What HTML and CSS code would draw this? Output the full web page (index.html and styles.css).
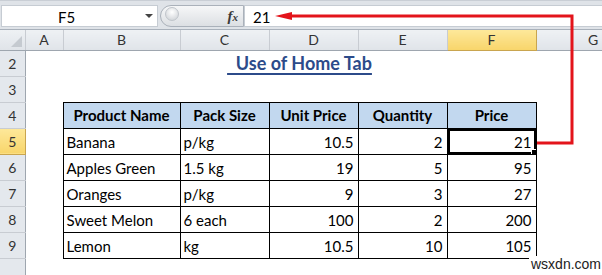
FILE: index.html
```html
<!DOCTYPE html>
<html>
<head>
<meta charset="utf-8">
<link rel="stylesheet" href="styles.css">
</head>
<body>
<div class="app">
  <div class="fbar">
    <div class="namebox"><span class="ref">F5</span><span class="dd"></span></div>
    <div class="grip"><span class="knob"></span><span class="fx">f<span class="fxx">x</span></span></div>
    <div class="formula">21</div>
  </div>
  <table class="sheet">
    <colgroup>
      <col class="c-rh"><col class="c-a"><col class="c-b"><col class="c-c"><col class="c-d"><col class="c-e"><col class="c-f"><col class="c-g">
    </colgroup>
    <tr class="colhdr">
      <th class="corner"><span class="tri"></span></th><th>A</th><th>B</th><th>C</th><th>D</th><th>E</th><th class="selhdr">F</th><th>G</th>
    </tr>
    <tr>
      <th class="rh">2</th><td></td><td colspan="5" class="title"><span>&nbsp;&nbsp;Use of Home Tab</span></td><td></td>
    </tr>
    <tr>
      <th class="rh">3</th><td></td><td></td><td></td><td></td><td></td><td></td><td></td>
    </tr>
    <tr class="thead">
      <th class="rh">4</th><td class="blank"></td><td class="h">Product Name</td><td class="h">Pack Size</td><td class="h">Unit Price</td><td class="h">Quantity</td><td class="h">Price</td><td class="blank"></td>
    </tr>
    <tr>
      <th class="rh selrow">5</th><td class="blank"></td><td class="d">Banana</td><td class="d">p/kg</td><td class="d n">10.5</td><td class="d n">2</td><td class="d n active"><span class="val">21</span><span class="selbox"></span><span class="handle"></span></td><td class="blank"></td>
    </tr>
    <tr>
      <th class="rh">6</th><td class="blank"></td><td class="d">Apples Green</td><td class="d">1.5 kg</td><td class="d n">19</td><td class="d n">5</td><td class="d n">95</td><td class="blank"></td>
    </tr>
    <tr>
      <th class="rh">7</th><td class="blank"></td><td class="d">Oranges</td><td class="d">p/kg</td><td class="d n">9</td><td class="d n">3</td><td class="d n">27</td><td class="blank"></td>
    </tr>
    <tr>
      <th class="rh">8</th><td class="blank"></td><td class="d">Sweet Melon</td><td class="d">6 each</td><td class="d n">100</td><td class="d n">2</td><td class="d n">200</td><td class="blank"></td>
    </tr>
    <tr>
      <th class="rh">9</th><td class="blank"></td><td class="d">Lemon</td><td class="d">kg</td><td class="d n">10.5</td><td class="d n">10</td><td class="d n">105</td><td class="blank"></td>
    </tr>
    <tr>
      <th class="rh"></th><td></td><td></td><td></td><td></td><td></td><td></td><td></td>
    </tr>
  </table>
  <svg class="connector" width="602" height="275" viewBox="0 0 602 275">
    <polyline points="288,16 572,16 572,143 537,143" fill="none" stroke="#E3141B" stroke-width="3"/>
    <polygon points="275,16 292,12 292,20" fill="#E3141B"/>
  </svg>
  <div class="watermark">wsxdn.com</div>
</div>
</body>
</html>
```

FILE: styles.css
```css
html, body {
  margin: 0;
  padding: 0;
  background: #ffffff;
}
.app {
  position: relative;
  width: 602px;
  height: 275px;
  overflow: hidden;
  font-family: "Lato", "Liberation Sans", sans-serif;
  color: #000;
}
.fbar {
  height: 30px;
  box-sizing: border-box;
  background: #dfe3e8;
  border-top: 1px solid #c9ced5;
  border-bottom: 1px solid #a9b1bb;
  display: flex;
  align-items: stretch;
  padding: 4px 0 2px 0;
}
.namebox {
  width: 157px;
  margin-left: 1px;
  background: #fff;
  border: 1px solid #c6ccd3;
  box-sizing: border-box;
  display: flex;
  align-items: center;
  position: relative;
}
.ref {
  flex: 1;
  text-align: center;
  font-size: 15px;
  padding-right: 14px;
  padding-top: 1px;
}
.dd {
  width: 0;
  height: 0;
  border-left: 4px solid transparent;
  border-right: 4px solid transparent;
  border-top: 4px solid #444;
  margin-right: 4px;
}
.grip {
  width: 84px;
  margin-left: 2px;
  box-sizing: border-box;
  border: 1px solid #aab1ba;
  border-radius: 11px 0 0 11px;
  background: linear-gradient(#f6f7f8, #dcdfe3);
  display: flex;
  align-items: center;
  justify-content: space-between;
  padding: 0 5px 0 4px;
}
.knob {
  width: 12px;
  height: 12px;
  border-radius: 50%;
  background: radial-gradient(circle at 50% 35%, #ffffff, #c9cdd2);
  border: 1px solid #c0c5cb;
  margin-top: -4px;
}
.fx {
  font-family: "Liberation Serif", "DejaVu Serif", serif;
  font-style: italic;
  font-size: 15px;
  font-weight: bold;
  color: #3a3a3a;
}
.fxx {
  font-size: 11px;
}
.formula {
  flex: 1;
  background: #fff;
  border: 1px solid #c6ccd3;
  border-right: none;
  box-sizing: border-box;
  font-size: 15px;
  padding-left: 8px;
  display: flex;
  align-items: center;
  padding-top: 1px;
}
.sheet {
  border-collapse: collapse;
  table-layout: fixed;
  width: 650px;
}
.c-rh { width: 25px; }
.c-a { width: 38px; }
.c-b { width: 117px; }
.c-c { width: 89px; }
.c-d { width: 89px; }
.c-e { width: 89px; }
.c-f { width: 89px; }
.c-g { width: 114px; }
.sheet th, .sheet td {
  padding: 0;
  overflow: hidden;
  white-space: nowrap;
}
.colhdr th {
  height: 19px;
  background: linear-gradient(#eef1f4, #e0e4e9);
  border-right: 1px solid #c8ccd2;
  border-bottom: 1px solid #9ea6af;
  font-weight: normal;
  font-size: 14px;
  color: #333;
  text-align: center;
  vertical-align: middle;
}
.colhdr th.selhdr {
  background: linear-gradient(#fde89a, #f8d56b);
  border-left: 1px solid #c9a54f;
  border-right: 1px solid #c9a54f;
  border-bottom: 1px solid #c9a54f;
}
.corner {
  position: relative;
}
.tri {
  position: absolute;
  right: 3px;
  bottom: 3px;
  width: 0;
  height: 0;
  border-left: 11px solid transparent;
  border-bottom: 11px solid #c5cad0;
}
.sheet tr {
  height: 26px;
}
.sheet tr.colhdr {
  height: 20px;
}
th.rh {
  background: #e4e8ed;
  border-right: 1px solid #9ea6af;
  border-bottom: 1px solid #c8ccd2;
  font-weight: normal;
  font-size: 14px;
  color: #333;
  text-align: center;
  vertical-align: middle;
}
th.rh.selrow {
  background: linear-gradient(#fde89a, #f8d56b);
  border-right: 1px solid #c9a54f;
  border-bottom: 1px solid #c9a54f;
}
.title {
  text-align: center;
  vertical-align: middle;
}
.title span {
  color: #2c4b8a;
  font-weight: bold;
  font-size: 18px;
  text-decoration: underline;
  text-decoration-thickness: 2px;
  text-underline-offset: 3px;
}
td.h, td.d {
  border: 1px solid #000;
  font-size: 15px;
  vertical-align: bottom;
  padding: 0 4px 3px 3px;
}
td.h {
  background: #c2d8ef;
  font-weight: bold;
  text-align: center;
  vertical-align: middle;
  padding: 0;
}
td.n {
  text-align: right;
}
td.active {
  position: relative;
}
.selbox {
  position: absolute;
  left: 0;
  top: 0;
  right: 0;
  bottom: 0;
  border: 2px solid #000;
  box-shadow: inset 0 0 0 1px #fff;
}
.handle {
  position: absolute;
  right: -2px;
  bottom: -2px;
  width: 5px;
  height: 5px;
  background: #000;
  border: 1px solid #fff;
}
.connector {
  position: absolute;
  left: 0;
  top: 0;
  pointer-events: none;
}
.watermark {
  position: absolute;
  left: 529px;
  top: 256px;
  font-family: "Liberation Sans", Arial, sans-serif;
  font-size: 14px;
  color: #222;
  background: #fff;
  padding: 0 2px;
}
```
